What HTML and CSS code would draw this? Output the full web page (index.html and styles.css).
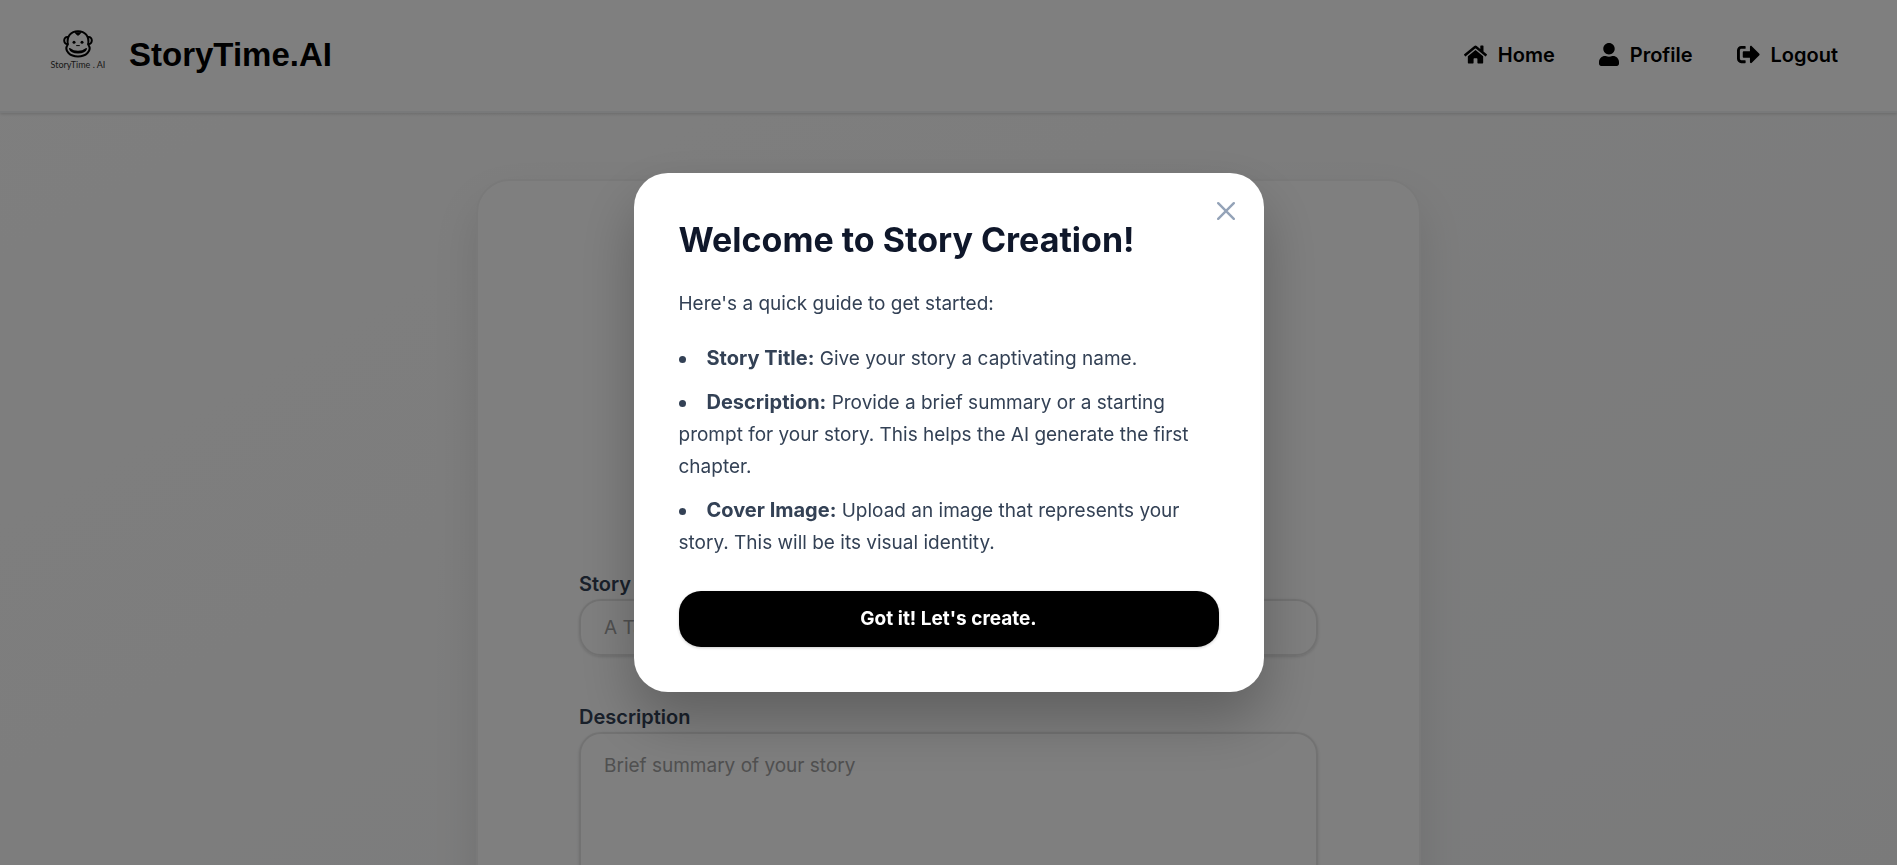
FILE: index.html
```html
<!DOCTYPE html>
<html lang="en">
<head>
<meta charset="utf-8">
<title>StoryTime.AI</title>
<link rel="stylesheet" href="styles.css">
</head>
<body>
<header class="header">
  <a class="brand" href="#">
    <span class="brand-mark">
      <svg class="monkey" viewBox="0 0 30 28" fill="none" stroke="#000" stroke-width="2" stroke-linecap="round" stroke-linejoin="round" aria-hidden="true">
        <path d="M5 7C2.500 6.600 1.200 8.500 1.200 10.500S2.500 14.200 4.600 14M25 7c2.500-.4 3.800 1.500 3.800 3.500S27.500 14.200 25.400 14"/>
        <path d="M4.800 14.500C3.500 6 8 1.200 15 1.200S26.500 6 25.200 14.500C27 17 27 20.500 24.500 23c-4.500 4.600-14.500 4.600-19 0C3 20.500 3 17 4.800 14.500z"/>
        <path d="M12.200 2.200C12.800 4 13.800 4.800 15 5.200c1.200-.4 2.200-1.200 2.800-3" fill="#000" stroke-width="1"/>
        <path d="M6.800 18.800c4.600 3.600 11.800 3.600 16.400 0-1.600 5.200-14.800 5.200-16.400 0z" stroke-width="1.600"/>
        <path d="M13.600 15.600h2.800" stroke-width="1"/>
        <circle cx="11" cy="12.200" r="1.500" fill="#000" stroke="none"/>
        <circle cx="19" cy="12.200" r="1.500" fill="#000" stroke="none"/>
      </svg>
      <span class="brand-caption">StoryTime . AI</span>
    </span>
    <span class="brand-name">StoryTime.AI</span>
  </a>
  <nav class="nav">
    <a class="nav-link" href="#"><svg class="icon-wide" viewBox="0 0 576 512" fill="currentColor" aria-hidden="true"><path d="M280.37 148.26L96 300.11V464a16 16 0 0 0 16 16l112.06-.29a16 16 0 0 0 15.92-16V368a16 16 0 0 1 16-16h64a16 16 0 0 1 16 16v95.64a16 16 0 0 0 16 16.05L464 480a16 16 0 0 0 16-16V300L295.67 148.26a12.19 12.19 0 0 0-15.3 0zM571.6 251.47L488 182.56V44.05a12 12 0 0 0-12-12h-56a12 12 0 0 0-12 12v72.61L318.47 43a48 48 0 0 0-61 0L4.34 251.47a12 12 0 0 0-1.6 16.9l25.5 31A12 12 0 0 0 45.15 301l235.22-193.74a12.19 12.19 0 0 1 15.3 0L530.9 301a12 12 0 0 0 16.9-1.6l25.5-31a12 12 0 0 0-1.7-16.93z"/></svg>Home</a>
    <a class="nav-link" href="#"><svg class="icon" viewBox="0 0 448 512" fill="currentColor" aria-hidden="true"><path d="M224 256c70.700 0 128-57.300 128-128S294.700 0 224 0 96 57.300 96 128s57.300 128 128 128zm89.600 32h-16.700c-22.200 10.200-46.900 16-72.900 16s-50.600-5.800-72.900-16h-16.700C60.200 288 0 348.200 0 422.400V464c0 26.500 21.500 48 48 48h352c26.500 0 48-21.500 48-48v-41.600c0-74.200-60.200-134.400-134.400-134.400z"/></svg>Profile</a>
    <a class="nav-link" href="#"><svg class="icon-wide" viewBox="0 0 512 512" fill="currentColor" aria-hidden="true"><path d="M497 273L329 441c-15 15-41 4.500-41-17v-96H152c-13.300 0-24-10.700-24-24v-96c0-13.300 10.700-24 24-24h136V88c0-21.400 25.900-32 41-17l168 168c9.300 9.400 9.300 24.600 0 34zM192 436v-40c0-6.600-5.400-12-12-12H96c-17.700 0-32-14.300-32-32V160c0-17.700 14.300-32 32-32h84c6.600 0 12-5.400 12-12V76c0-6.600-5.400-12-12-12H96c-53 0-96 43-96 96v192c0 53 43 96 96 96h84c6.600 0 12-5.400 12-12z"/></svg>Logout</a>
  </nav>
</header>
<main class="main">
  <form class="card">
    <div class="field">
      <label for="title">Story Title</label>
      <input id="title" type="text" placeholder="A Tale of Adventure">
    </div>
    <div class="field">
      <label for="description">Description</label>
      <textarea id="description" placeholder="Brief summary of your story"></textarea>
    </div>
  </form>
</main>
<div class="overlay">
  <section class="modal" role="dialog" aria-modal="true" aria-labelledby="guide-title">
    <button class="close" type="button" aria-label="Close"><svg viewBox="0 0 18 18" fill="none" stroke="currentColor" stroke-width="2.400" stroke-linecap="round" aria-hidden="true"><path d="M1.200 1.200l15.600 15.600M16.800 1.200L1.200 16.800"/></svg></button>
    <h2 id="guide-title">Welcome to Story Creation!</h2>
    <p>Here's a quick guide to get started:</p>
    <ul class="guide">
      <li><strong>Story Title:</strong> Give your story a captivating name.</li>
      <li><strong>Description:</strong> Provide a brief summary or a starting prompt for your story. This helps the AI generate the first chapter.</li>
      <li><strong>Cover Image:</strong> Upload an image that represents your story. This will be its visual identity.</li>
    </ul>
    <button class="confirm" type="button">Got it! Let's create.</button>
  </section>
</div>
</body>
</html>
```

FILE: styles.css
```css
* { box-sizing: border-box; }
body {
  margin: 0;
  height: 100vh;
  overflow: hidden;
  font-family: Inter, "Liberation Sans", sans-serif;
  font-size: 19px;
  line-height: 32px;
  color: #334155;
  background: linear-gradient(150deg, #fefefe 0%, #fbfbfb 40%, #f6f7f8 85%, #f5f5f5 100%);
}
.header {
  display: flex;
  justify-content: space-between;
  align-items: center;
  height: 113px;
  padding: 0 59px 2px 45px;
  background: #fff;
  border-bottom: 2px solid #f1f2f4;
  box-shadow: 0 1px 3px rgba(0, 0, 0, .16);
}
.brand {
  display: flex;
  align-items: center;
  gap: 18px;
  color: #000;
  text-decoration: none;
}
.brand-mark {
  display: flex;
  flex-direction: column;
  align-items: center;
  width: 66px;
  padding-bottom: 8px;
}
.monkey { width: 30px; height: 28px; }
.brand-caption {
  font-family: Lato, sans-serif;
  font-size: 9px;
  line-height: 14px;
  white-space: nowrap;
  color: #333;
}
.brand-name {
  font-family: "Liberation Sans", sans-serif;
  font-size: 33px;
  line-height: 40px;
  font-weight: 700;
}
.nav { display: flex; gap: 44px; }
.nav-link {
  display: flex;
  align-items: center;
  gap: 11px;
  color: #000;
  font-size: 20px;
  font-weight: 600;
  text-decoration: none;
}
.icon { width: 20px; height: 23px; }
.icon-wide { width: 23px; height: 23px; }
.main { display: flex; justify-content: center; padding-top: 66px; }
.card {
  display: flex;
  flex-direction: column;
  gap: 46px;
  width: 100%;
  max-width: 945px;
  padding: 388px 101px 80px;
  background: rgba(255, 255, 255, .85);
  border: 2px solid #f2f2f2;
  border-radius: 34px;
  box-shadow: 0 22px 45px rgba(0, 0, 0, .1);
}
.field { display: flex; flex-direction: column; }
.field label { font-size: 20px; font-weight: 600; line-height: 30px; }
.field input,
.field textarea {
  width: 100%;
  font: inherit;
  color: #111827;
  background: transparent;
  border: 2px solid #e5e5e5;
  border-radius: 22px;
  outline: 0;
  box-shadow: 0 1px 3px rgba(0, 0, 0, .14);
}
.field input { height: 57px; padding: 0 23px; }
.field textarea { height: 240px; padding: 16px 23px; resize: none; }
.field ::placeholder { color: #a1a1a1; opacity: 1; }
.overlay {
  position: fixed;
  inset: 0;
  display: flex;
  align-items: center;
  justify-content: center;
  background: rgba(0, 0, 0, .5);
}
.modal {
  position: relative;
  width: 100%;
  max-width: 630px;
  padding: 45px;
  background: #fff;
  border-radius: 34px;
  box-shadow: 0 28px 56px rgba(0, 0, 0, .25);
}
.modal h2 {
  margin: 0 0 26px;
  font-size: 34px;
  line-height: 44px;
  font-weight: 700;
  color: #0f172a;
}
.modal p { margin: 0 0 23px; }
.guide {
  display: flex;
  flex-direction: column;
  gap: 12px;
  margin: 0 0 32px;
  padding: 0;
  list-style: none;
}
.guide li::before {
  content: "";
  display: inline-block;
  width: 7px;
  height: 7px;
  margin-right: 21px;
  vertical-align: middle;
  background: currentColor;
  border-radius: 50%;
}
.guide strong { font-size: 20px; line-height: 24px; }
.close {
  position: absolute;
  top: 29px;
  right: 29px;
  display: flex;
  padding: 0;
  color: #94a3b8;
  background: none;
  border: 0;
}
.close svg { width: 18px; height: 18px; }
.confirm {
  width: 100%;
  height: 56px;
  font: inherit;
  font-weight: 700;
  color: #fff;
  background: #000;
  border: 0;
  border-radius: 22px;
  box-shadow: 0 1px 3px rgba(0, 0, 0, .2);
}
```
